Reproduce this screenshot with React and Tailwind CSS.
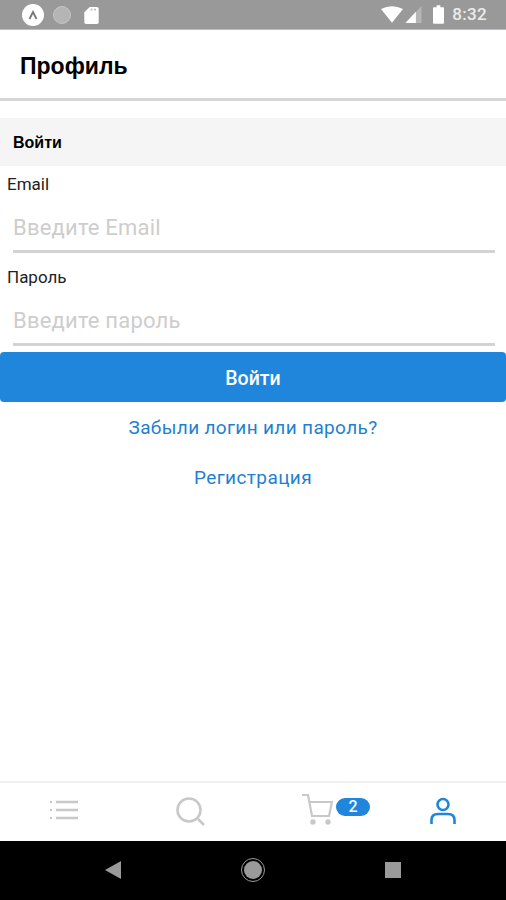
import React from "react";

const StatusBar = () => (
  <div className="h-[30px] shrink-0 bg-[#999999] border-b border-[#bdbdbd] flex items-center pl-[22px] pr-[19px]">
    <div className="w-[22px] h-[22px] rounded-full bg-white flex items-center justify-center">
      <svg width="12" height="12" viewBox="0 0 12 12" fill="none" stroke="#777" strokeWidth="1.8">
        <path d="M2.5 10 L6 3 L9.5 10" />
      </svg>
    </div>
    <div className="w-[18px] h-[18px] rounded-full bg-[#b5b5b5] border border-[#c4c4c4] ml-[9px]" />
    <svg className="ml-[13px]" width="15" height="18" viewBox="0 0 16 20">
      <path d="M6 1 H14 Q16 1 16 3 V18 Q16 20 14 20 H2 Q0 20 0 18 V7 Z" fill="#fff" />
      <rect x="7" y="3" width="2" height="2" fill="#bbb" />
      <rect x="11" y="3" width="2" height="2" fill="#bbb" />
    </svg>
    <div className="flex-1" />
    <svg width="22" height="17" viewBox="0 0 24 18">
      <path d="M0 3 Q12 -3 24 3 L12 18 Z" fill="#fff" />
    </svg>
    <svg className="ml-[2px]" width="17" height="17" viewBox="0 0 17 18">
      <path d="M17 0 V18 H0 Z" fill="#b5b5b5" />
      <path d="M11 6 V18 H0 Z" fill="#fff" />
    </svg>
    <svg className="ml-[11px]" width="11" height="19" viewBox="0 0 12 20">
      <path d="M4 0 H8 V2 H11 Q12 2 12 3 V19 Q12 20 11 20 H1 Q0 20 0 19 V3 Q0 2 1 2 H4 Z" fill="#fff" />
    </svg>
    <span className="ml-[8px] font-['Roboto',sans-serif] text-[17px] leading-none text-[#ececec] font-medium tracking-[0.3px]">
      8:32
    </span>
  </div>
);

const Field = ({ label, placeholder, type }) => (
  <div>
    <div className="pl-[7px] h-[18px] text-[17px] leading-[18px] text-[#222]">{label}</div>
    <div className="ml-[13px] mr-[11px] h-[60px] pt-[12px] border-b-[3px] border-[#d3d3d3] flex items-center">
      <input
        type={type}
        placeholder={placeholder}
        className="w-full bg-transparent outline-none text-[22px] tracking-[0.2px] placeholder:text-[#cdcdcd] font-['Roboto',sans-serif]"
      />
    </div>
  </div>
);

const TabBar = () => (
  <div className="h-[60px] shrink-0 border-t-2 border-[#f0f0f0] flex items-center bg-white">
    <div className="w-[127px] flex justify-center mt-[-4px]">
      <svg width="30" height="24" viewBox="0 0 30 24" stroke="#c8c8c8" strokeWidth="2.4" fill="none">
        <path d="M7 4 H29 M7 12 H29 M7 20 H29" />
        <path d="M1 4 H3 M1 12 H3 M1 20 H3" strokeWidth="1.8" />
      </svg>
    </div>
    <div className="w-[127px] flex justify-center">
      <svg width="30" height="30" viewBox="0 0 30 30" stroke="#c8c8c8" strokeWidth="2.6" fill="none">
        <circle cx="13" cy="13" r="11.5" />
        <path d="M22 22 L28 28" />
      </svg>
    </div>
    <div className="w-[125px] flex justify-center items-start pl-[38px] mt-[-7px]">
      <svg width="32" height="32" viewBox="0 0 32 32" stroke="#c8c8c8" strokeWidth="2.2" fill="none">
        <path d="M1 2 H7 L11 23 H28 L31 9 H8" />
        <circle cx="12" cy="29" r="1.6" fill="#c8c8c8" />
        <circle cx="27" cy="29" r="1.6" fill="#c8c8c8" />
      </svg>
      <span className="ml-[3px] mt-[5px] shrink-0 w-[34px] h-[18px] rounded-full bg-[#1f86dc] text-white text-[16px] leading-[18px] text-center font-medium">
        2
      </span>
    </div>
    <div className="w-[127px] flex justify-center mt-[-2px]">
      <svg width="26" height="28" viewBox="0 0 26 28" stroke="#1f86dc" strokeWidth="2.6" fill="none">
        <circle cx="13" cy="7.5" r="5.5" />
        <path d="M1.5 27 V23 Q1.5 17 8 17 H18 Q24.5 17 24.5 23 V27" />
      </svg>
    </div>
  </div>
);

const NavBar = () => (
  <div className="h-[59px] shrink-0 bg-black flex items-center pl-[105px] pb-[1px]">
    <svg width="16" height="18" viewBox="0 0 16 18">
      <path d="M16 0 V18 L0 9 Z" fill="#9a9a9a" />
    </svg>
    <div className="w-[24px] h-[24px] ml-[120px] rounded-full border border-[#9a9a9a] flex items-center justify-center">
      <div className="w-[18px] h-[18px] rounded-full bg-[#9a9a9a]" />
    </div>
    <div className="w-[16px] h-[16px] bg-[#9a9a9a] ml-[120px]" />
  </div>
);

export default function App() {
  return (
    <div className="w-[506px] h-[900px] bg-white flex flex-col font-['Roboto','Liberation_Sans',sans-serif] overflow-hidden">
      <StatusBar />
      <div className="h-[71px] shrink-0 border-b-[3px] border-[#d6d6d6] flex items-center pl-[20px] pt-[5px]">
        <h1 className="text-[23px] font-bold text-black font-['Liberation_Sans',sans-serif]">Профиль</h1>
      </div>
      <div className="flex-1">
        <div className="mt-[17px] h-[48px] bg-[#f5f5f5] flex items-center pl-[13px] pt-[2px]">
          <span className="text-[16px] font-bold text-black font-['Liberation_Sans',sans-serif]">Войти</span>
        </div>
        <div className="pt-[9px]">
          <Field label="Email" placeholder="Введите Email" type="email" />
          <div className="h-[15px]" />
          <Field label="Пароль" placeholder="Введите пароль" type="password" />
        </div>
        <button className="mt-[6px] w-full h-[50px] pt-[3px] rounded-[4px] bg-[#1f86dc] text-white text-[19.5px] font-medium">
          Войти
        </button>
        <div className="mt-[13px] text-center text-[#1f7fd2] text-[19px] leading-[26px] tracking-[0.35px]">
          Забыли логин или пароль?
        </div>
        <div className="mt-[24px] text-center text-[#1f7fd2] text-[19px] leading-[26px] tracking-[0.4px]">
          Регистрация
        </div>
      </div>
      <TabBar />
      <NavBar />
    </div>
  );
}
